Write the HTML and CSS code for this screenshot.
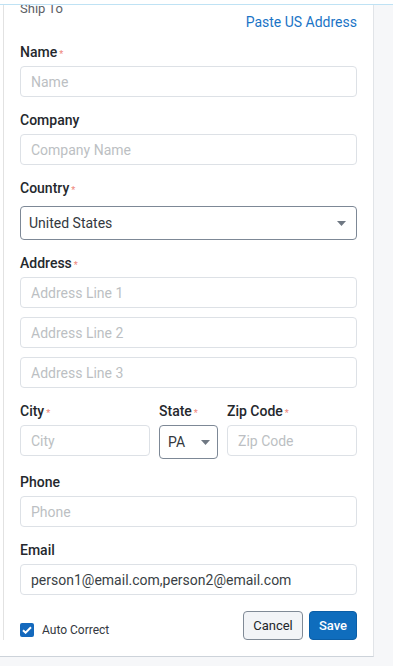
FILE: index.html
```html
<!DOCTYPE html>
<html lang="en">
<head>
    <meta charset="UTF-8">
    <meta name="viewport" content="width=device-width, initial-scale=1.0">
    <title>Ship To</title>
    <link rel="stylesheet" href="styles.css">
</head>
<body>
    <div class="topbar"></div>
    <div class="page">
        <div class="panel">
            <div class="panel-inner">
                <div class="ship-head">
                    <span class="ship-title">Ship To</span>
                    <a href="#" class="paste-link">Paste US Address</a>
                </div>

                <div class="field">
                    <label for="name">Name<span class="req">*</span></label>
                    <input type="text" id="name" placeholder="Name">
                </div>
                <div class="field">
                    <label for="company">Company</label>
                    <input type="text" id="company" placeholder="Company Name">
                </div>
                <div class="field">
                    <label for="country">Country<span class="req">*</span></label>
                    <div class="select-wrap select-wrap--spaced">
                        <select id="country">
                            <option>United States</option>
                        </select>
                        <svg class="caret" width="9" height="5" viewBox="0 0 9 5"><path d="M0 0h9L4.5 5z" fill="#6f7883"/></svg>
                    </div>
                </div>
                <div class="field">
                    <label for="addr1">Address<span class="req">*</span></label>
                    <div class="stack">
                        <input type="text" id="addr1" placeholder="Address Line 1">
                        <input type="text" placeholder="Address Line 2">
                        <input type="text" placeholder="Address Line 3">
                    </div>
                </div>
                <div class="field row">
                    <div>
                        <label for="city">City<span class="req">*</span></label>
                        <input type="text" id="city" placeholder="City">
                    </div>
                    <div>
                        <label for="state">State<span class="req">*</span></label>
                        <div class="select-wrap">
                            <select id="state">
                                <option>PA</option>
                            </select>
                            <svg class="caret caret--small" width="9" height="5" viewBox="0 0 9 5"><path d="M0 0h9L4.5 5z" fill="#6f7883"/></svg>
                        </div>
                    </div>
                    <div>
                        <label for="zip">Zip Code<span class="req">*</span></label>
                        <input type="text" id="zip" placeholder="Zip Code">
                    </div>
                </div>
                <div class="field">
                    <label for="phone">Phone</label>
                    <input type="tel" id="phone" placeholder="Phone">
                </div>
                <div class="field field--last">
                    <label for="email">Email</label>
                    <input type="text" id="email" value="person1@email.com,person2@email.com">
                </div>

                <div class="actions">
                    <label class="check">
                        <span class="check-box">
                            <svg width="10" height="8" viewBox="0 0 10 8"><path d="M1 4.2l2.6 2.5L9 1.2" fill="none" stroke="#fff" stroke-width="2"/></svg>
                        </span>
                        Auto Correct
                    </label>
                    <div class="buttons">
                        <button type="button" class="btn btn-cancel">Cancel</button>
                        <button type="button" class="btn btn-save">Save</button>
                    </div>
                </div>
            </div>
        </div>
    </div>
</body>
</html>
```

FILE: styles.css
```css
* { box-sizing: border-box; margin: 0; padding: 0; }
body {
    font-family: Roboto, "Liberation Sans", Arial, sans-serif;
    background-color: #f6f7f9;
    color: #1f2328;
    height: 666px;
    overflow: hidden;
}
.topbar {
    height: 5px;
    background: #ffffff;
    border-bottom: 1px solid #bfe2f4;
}
.page {
    display: flex;
}
.panel {
    width: 374px;
    background: #ffffff;
    border-right: 1px solid #e1e4e8;
    border-bottom: 1px solid #cdd3da;
    padding-bottom: 16px;
    overflow: hidden;
}
.panel-inner {
    margin-left: 3px;
    border-left: 1px solid #e2e2e2;
    padding: 0 16px 0 16px;
}
.ship-head {
    display: flex;
    justify-content: space-between;
    align-items: flex-start;
    height: 37px;
}
.ship-title {
    font-size: 13px;
    line-height: 16px;
    margin-top: -4px;
    color: #5d6166;
}
.paste-link {
    margin-top: 7px;
    font-size: 14px;
    line-height: 20px;
    color: #1a74c6;
    text-decoration: none;
}
.field {
    margin-bottom: 13px;
}
label {
    display: flex;
    align-items: center;
    font-size: 14px;
    line-height: 20px;
    font-weight: 500;
    color: #24282d;
    margin-bottom: 4px;
}
.req {
    color: #ef8a80;
    font-size: 9px;
    margin-left: 2px;
    line-height: 10px;
    padding-top: 3px;
}
input {
    display: block;
    width: 100%;
    height: 31px;
    padding: 0 10px;
    border: 1px solid #dde1e6;
    border-radius: 4px;
    font-family: inherit;
    font-size: 14px;
    color: #3a3f45;
    background: #ffffff;
    outline: none;
}
input::placeholder {
    color: #bcbfc3;
}
.stack {
    display: flex;
    flex-direction: column;
    gap: 9px;
}
.select-wrap {
    position: relative;
}
.select-wrap--spaced {
    margin-top: 8px;
}
select {
    display: block;
    width: 100%;
    height: 34px;
    padding: 0 24px 0 8px;
    border: 1px solid #7d8896;
    border-radius: 4px;
    font-family: inherit;
    font-size: 14px;
    color: #33383e;
    background: #ffffff;
    appearance: none;
    -webkit-appearance: none;
    outline: none;
}
.caret {
    position: absolute;
    right: 11px;
    top: 15px;
    pointer-events: none;
}
.caret--small {
    right: 8px;
}
.row {
    display: grid;
    grid-template-columns: 130px 59px 1fr;
    gap: 9px;
}
.field--last {
    margin-bottom: 16px;
}
.actions {
    display: flex;
    justify-content: space-between;
    align-items: flex-end;
}
.check {
    display: flex;
    align-items: center;
    gap: 8px;
    font-size: 12px;
    font-weight: 400;
    color: #333840;
    margin-bottom: 0;
}
.check-box {
    width: 14px;
    height: 14px;
    border-radius: 2px;
    background: #1469bd;
    display: flex;
    align-items: center;
    justify-content: center;
}
.buttons {
    display: flex;
    gap: 6px;
}
.btn {
    height: 29px;
    border-radius: 4px;
    font-family: inherit;
    font-size: 13px;
    cursor: pointer;
}
.btn-cancel {
    width: 60px;
    background: #f2f4f7;
    border: 1px solid #808a96;
    color: #22262b;
}
.btn-save {
    width: 48px;
    background: #0f6dbd;
    border: 1px solid #0b5ea6;
    color: #ffffff;
    font-weight: 500;
}
```
